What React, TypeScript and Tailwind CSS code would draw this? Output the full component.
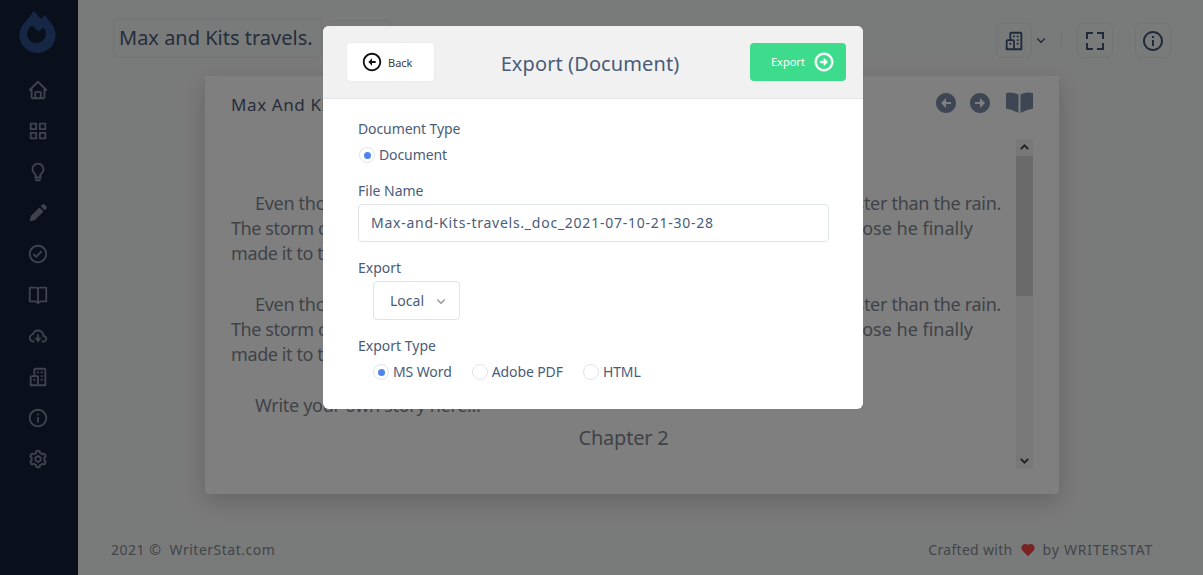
import {
  BiHome,
  BiGridAlt,
  BiBulb,
  BiSolidPencil,
  BiCheckCircle,
  BiBookOpen,
  BiCloudDownload,
  BiBuildings,
  BiInfoCircle,
  BiCog,
  BiLeftArrowCircle,
  BiRightArrowCircle,
  BiSolidLeftArrowCircle,
  BiSolidRightArrowCircle,
  BiFullscreen,
  BiChevronDown,
  BiChevronUp,
  BiSolidHeart,
} from "react-icons/bi";

const navIcons = [
  BiHome,
  BiGridAlt,
  BiBulb,
  BiSolidPencil,
  BiCheckCircle,
  BiBookOpen,
  BiCloudDownload,
  BiBuildings,
  BiInfoCircle,
  BiCog,
];

function Logo() {
  return (
    <svg className="-ml-px" width="37" height="43" viewBox="0 0 110 130">
      <path
        fillRule="evenodd"
        fill="#2c4f8c"
        d="M43 2L65 27L78 15C90 35 110 50 110 75A55 55 0 0 1 0 75C0 45 30 30 43 2ZM38 47L58 65L73 53A28.5 28.5 0 1 1 38 47Z"
      />
    </svg>
  );
}

function OpenBook() {
  return (
    <svg width="27" height="22" viewBox="0 0 27 22" fill="currentColor">
      <path d="M0 1Q6 -0.5 12.5 2.5L12.5 21Q6 17.5 0 16.5Z" />
      <path d="M14.5 2.5Q20 -0.5 27 1L27 16.5Q20 17.5 14.5 21Z" />
    </svg>
  );
}

function Radio({ label, checked }: { label: string; checked?: boolean }) {
  return (
    <label className="flex items-center gap-1">
      <span className="flex h-4 w-4 items-center justify-center rounded-full border border-[#dfe3ec] bg-white">
        {checked && <span className="h-[7px] w-[7px] rounded-full bg-[#4f84ee]" />}
      </span>
      <span className="text-sm tracking-[-0.1px] text-[#4a5c78]">{label}</span>
    </label>
  );
}

function StoryBlock() {
  return (
    <div className="mb-[26px] text-[18px] leading-[25px] text-[#7f8790] whitespace-nowrap">
      <div className="flex justify-between pl-6 pr-[15px]">
        <span className="tracking-[-0.3px]">Even though</span>
        <span className="tracking-[-0.3px]">faster than the rain.</span>
      </div>
      <div className="flex justify-between pr-[43px]">
        <span className="tracking-[-0.4px]">The storm clouds</span>
        <span>suppose he finally</span>
      </div>
      <div className="tracking-[-0.4px]">made it to the</div>
    </div>
  );
}

export default function App() {
  return (
    <div className="relative flex h-[575px] w-[1203px] overflow-hidden bg-[#f3f6f4] font-['Noto_Sans',sans-serif]">
      {/* Sidebar */}
      <aside className="flex w-[78px] shrink-0 flex-col items-center bg-[#141f39] pr-[2px] pt-[10px]">
        <Logo />
        <nav className="mt-[16px] flex flex-col items-center">
          {navIcons.map((Icon, i) => (
            <div key={i} className="flex h-[41px] w-[41px] items-center justify-center text-[#7d8798]">
              <Icon className="h-[22px] w-[22px]" />
            </div>
          ))}
        </nav>
      </aside>

      {/* Page */}
      <main className="flex min-w-0 flex-1 flex-col">
        <header className="flex h-[76px] pl-[35px] pr-[32px] pt-[18px]">
          <div className="flex h-[40px] w-[209px] items-center rounded-md border border-[#e3e6e8] pl-[5px] text-[20px] text-[#4a5c78] whitespace-nowrap">
            Max and Kits travels.
          </div>
          <div className="ml-[9px] mt-[2px] h-[38px] w-[60px] rounded-md border border-[#e3e6e8]" />
          <div className="ml-auto mt-[5px] flex items-start">
            <div className="flex h-[35px] w-[36px] items-center justify-center rounded-md border border-[#e3e6e8] text-[#3f5574]">
              <BiBuildings className="h-[22px] w-[22px]" />
            </div>
            <BiChevronDown className="mt-[8px] h-[18px] w-[18px] text-[#3f5574]" />
            <div className="ml-[11px] mt-[8px] h-4 w-px bg-[#dfe2e5]" />
            <div className="ml-[15px] flex h-[35px] w-[36px] items-center justify-center rounded-md border border-[#e3e6e8] text-[#3f5574]">
              <BiFullscreen className="h-6 w-6" />
            </div>
            <div className="ml-[22px] flex h-[35px] w-[36px] items-center justify-center rounded-md border border-[#e3e6e8] text-[#3f5574]">
              <BiInfoCircle className="h-6 w-6" />
            </div>
          </div>
        </header>

        <section className="ml-[127px] mr-[144px] h-[418px] rounded-b bg-white px-[26px] pt-[14px] shadow-[0_8px_24px_rgba(0,0,0,0.18)]">
          <div className="flex h-[26px] items-center justify-between">
            <h2 className="pt-[3px] text-[17px] tracking-[0.6px] text-[#4d5d75]">Max And Kits</h2>
            <div className="flex items-center text-[#7a8da5]">
              <BiSolidLeftArrowCircle className="h-6 w-6" />
              <BiSolidRightArrowCircle className="ml-[10px] h-6 w-6" />
              <span className="ml-[14px]">
                <OpenBook />
              </span>
            </div>
          </div>
          <div className="mt-[23px] flex h-[330px] overflow-hidden">
            <div className="min-w-0 flex-1 pt-[52px]">
              <StoryBlock />
              <StoryBlock />
              <div className="pl-6 text-[18px] leading-[25px] tracking-[-0.3px] text-[#7f8790]">
                Write your own story here...
              </div>
              <div className="mt-[7px] text-center text-[20px] leading-[25px] tracking-[-0.2px] text-[#7f8790]">
                Chapter 2
              </div>
            </div>
            <div className="flex w-[17px] shrink-0 flex-col bg-[#f1f1f1]">
              <div className="flex h-[17px] items-center justify-center text-[#404040]">
                <BiChevronUp className="h-[17px] w-[17px] stroke-[0.8]" />
              </div>
              <div className="h-[140px] bg-[#d4d4d4]" />
              <div className="flex-1" />
              <div className="flex h-[17px] items-center justify-center text-[#404040]">
                <BiChevronDown className="h-[17px] w-[17px] stroke-[0.8]" />
              </div>
            </div>
          </div>
        </section>

        <footer className="mt-[46px] flex items-center justify-between pl-[33px] pr-[50px] text-sm text-[#838a96]">
          <span className="tracking-[0.5px]">2021 ©&nbsp; WriterStat.com</span>
          <span className="flex items-center tracking-[0.3px]">
            Crafted with
            <BiSolidHeart className="mx-[7px] h-4 w-4 text-[#f4464a]" />
            <span className="tracking-[0.8px]">by WRITERSTAT</span>
          </span>
        </footer>
      </main>

      {/* Modal */}
      <div className="absolute inset-0 bg-black/50 pt-[26px]">
        <div className="ml-[323px] w-[540px] overflow-hidden rounded-md bg-white">
          <div className="flex h-[73px] items-center border-b border-[#e2e4ec] bg-[#f1f1f1] pl-[23px] pr-[17px]">
            <button className="flex h-10 w-[89px] items-center rounded border border-[#ebebeb] bg-white pl-[14px] text-[11px] text-[#3b3b3b]">
              <BiLeftArrowCircle className="h-[22px] w-[22px] text-[#111]" />
              <span className="ml-[5px] pt-[3px]">Back</span>
            </button>
            <h1 className="flex-1 pr-[5px] pt-[3px] text-center text-[20px] tracking-[0.1px] text-[#4a5c78]">
              Export (Document)
            </h1>
            <button className="flex h-[38px] w-[96px] items-center rounded bg-[#3ddc8d] pl-[21px] text-[11px] text-white">
              Export
              <BiRightArrowCircle className="ml-[8px] h-[22px] w-[22px] stroke-[0.6]" />
            </button>
          </div>
          <div className="h-[310px] px-[35px] pt-[20px]">
            <p className="text-sm leading-5 tracking-[-0.1px] text-[#4a5c78]">Document Type</p>
            <div className="ml-px mt-[6px]">
              <Radio label="Document" checked />
            </div>
            <p className="mt-[16px] text-sm leading-5 text-[#4a5c78]">File Name</p>
            <div className="mt-[3px] flex h-[38px] w-[471px] items-center rounded border border-[#dfe3ec] pl-3 text-sm tracking-[0.75px] text-[#4a5c78]">
              Max-and-Kits-travels._doc_2021-07-10-21-30-28
            </div>
            <p className="mt-[16px] text-sm leading-5 text-[#4a5c78]">Export</p>
            <div className="ml-[15px] mt-[3px] flex h-[39px] w-[87px] items-center rounded border border-[#dfe3ec] pl-4 text-sm text-[#4a5c78]">
              Local
              <BiChevronDown className="ml-[8px] h-[18px] w-[18px] text-[#9a9a9a]" />
            </div>
            <p className="mt-[16px] text-sm leading-5 text-[#4a5c78]">Export Type</p>
            <div className="ml-[15px] mt-[6px] flex gap-5">
              <Radio label="MS Word" checked />
              <Radio label="Adobe PDF" />
              <Radio label="HTML" />
            </div>
          </div>
        </div>
      </div>
    </div>
  );
}
